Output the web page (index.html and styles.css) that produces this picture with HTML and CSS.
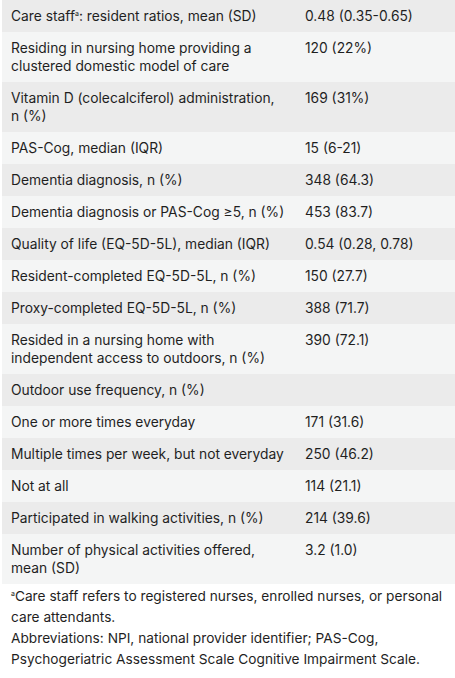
FILE: index.html
```html
<!DOCTYPE html>
<html>
<head>
<meta charset="utf-8">
<link rel="stylesheet" href="styles.css">
</head>
<body>
<div class="wrap">
<table class="data">
<tbody>
<tr><td>Care staff<sup>a</sup>: resident ratios, mean (SD)</td><td>0.48 (0.35-0.65)</td></tr>
<tr><td>Residing in nursing home providing a clustered domestic model of care</td><td>120 (22%)</td></tr>
<tr><td>Vitamin D (colecalciferol) administration,<br>n (%)</td><td>169 (31%)</td></tr>
<tr><td>PAS-Cog, median (IQR)</td><td>15 (6-21)</td></tr>
<tr><td>Dementia diagnosis, n (%)</td><td>348 (64.3)</td></tr>
<tr><td>Dementia diagnosis or PAS-Cog ≥5, n (%)</td><td>453 (83.7)</td></tr>
<tr><td>Quality of life (EQ-5D-5L), median (IQR)</td><td>0.54 (0.28, 0.78)</td></tr>
<tr><td>Resident-completed EQ-5D-5L, n (%)</td><td>150 (27.7)</td></tr>
<tr><td>Proxy-completed EQ-5D-5L, n (%)</td><td>388 (71.7)</td></tr>
<tr><td>Resided in a nursing home with independent access to outdoors, n (%)</td><td>390 (72.1)</td></tr>
<tr><td>Outdoor use frequency, n (%)</td><td></td></tr>
<tr><td>One or more times everyday</td><td>171 (31.6)</td></tr>
<tr><td>Multiple times per week, but not everyday</td><td>250 (46.2)</td></tr>
<tr><td>Not at all</td><td>114 (21.1)</td></tr>
<tr><td>Participated in walking activities, n (%)</td><td>214 (39.6)</td></tr>
<tr><td>Number of physical activities offered, mean (SD)</td><td>3.2 (1.0)</td></tr>
</tbody>
</table>
<div class="notes">
<p><sup>a</sup>Care staff refers to registered nurses, enrolled nurses, or personal care attendants.</p>
<p>Abbreviations: NPI, national provider identifier; PAS-Cog, Psychogeriatric Assessment Scale Cognitive Impairment Scale.</p>
</div>
</div>
</body>
</html>
```

FILE: styles.css
```css
html, body {
  margin: 0;
  padding: 0;
  background: #ffffff;
}
body {
  font-family: Inter, Roboto, "Liberation Sans", sans-serif;
  color: #1f1f1f;
  font-size: 13.8px;
}
.wrap {
  padding-left: 2px;
}
.data {
  width: 453px;
  border-collapse: collapse;
  table-layout: fixed;
}
.data td {
  vertical-align: top;
  padding: 7px 7px 7px 9px;
  line-height: 18px;
}
.data td:first-child {
  width: 278px;
}
.data tr:nth-child(odd) td {
  background: #ebebeb;
}
.data tr:nth-child(even) td {
  background: #f4f5f5;
}
sup {
  font-size: 7px;
  line-height: 0;
  vertical-align: 5px;
}
.notes {
  padding: 2px 4px 0 9px;
  font-size: 13.7px;
  line-height: 21px;
}
.notes p {
  margin: 0;
}
```
